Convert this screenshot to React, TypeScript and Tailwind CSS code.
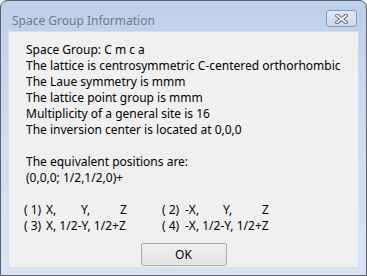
import React from "react";

const font = { fontFamily: '"Noto Sans", "Open Sans", sans-serif' };

export default function App() {
  return (
    <div className="w-[367px] h-[276px] bg-white" style={font}>
      <div className="w-[367px] h-[276px] rounded-t-[7px] border border-[#5b6069] bg-gradient-to-b from-[#bcd0ea] via-[#cfdef0] to-[#d8e4f3] flex flex-col">
        <div className="h-[30px] flex items-start justify-between shrink-0">
          <div className="pl-[11px] pt-[12px] text-[12px] leading-[16px] text-[#6d7a8a]">Space Group Information</div>
          <div className="mt-[9px] mr-[9px] w-[31px] h-[17px] rounded-[3px] border border-[#8a9bb3] bg-gradient-to-b from-[#e0e8f3] to-[#cdd9ea] flex items-center justify-center">
            <svg width="13" height="10" viewBox="0 0 13 10">
              <path d="M2 1.5 L11 8.5 M11 1.5 L2 8.5" stroke="#5d6a7c" strokeWidth="3.6" strokeLinecap="square" />
              <path d="M2 1.5 L11 8.5 M11 1.5 L2 8.5" stroke="#ffffff" strokeWidth="1.6" strokeLinecap="square" />
            </svg>
          </div>
        </div>
        <div className="mx-[7px] h-[237px] bg-[#f0f0f0] border border-[#d4dfee] flex flex-col text-[12px] leading-[16px] text-black">
          <div className="pt-[10px] pl-[17px]">
            <div>Space Group: C m c a</div>
            <div>The lattice is centrosymmetric C-centered orthorhombic</div>
            <div>The Laue symmetry is mmm</div>
            <div>The lattice point group is mmm</div>
            <div>Multiplicity of a general site is 16</div>
            <div>The inversion center is located at 0,0,0</div>
            <div className="h-[16px]" />
            <div>The equivalent positions are:</div>
            <div>(0,0,0; 1/2,1/2,0)+</div>
            <div className="h-[16px]" />
          </div>
          <div className="pl-[15px]">
            <div className="flex whitespace-pre">
              <span className="w-[22px]">( 1)</span>
              <span className="w-[35px]">X,</span>
              <span className="w-[39px]">Y,</span>
              <span className="w-[42px]">Z</span>
              <span className="w-[23px]">( 2)</span>
              <span className="w-[38px]">-X,</span>
              <span className="w-[39px]">Y,</span>
              <span>Z</span>
            </div>
            <div className="flex whitespace-pre">
              <span className="w-[22px]">( 3)</span>
              <span className="w-[116px]">X, 1/2-Y, 1/2+Z</span>
              <span className="w-[23px]">( 4)</span>
              <span>-X, 1/2-Y, 1/2+Z</span>
            </div>
          </div>
          <div className="flex justify-center mt-[9px]">
            <button className="w-[86px] h-[23px] border border-[#acacac] rounded-[2px] bg-gradient-to-b from-[#f0f0f0] to-[#e3e3e3] text-[12px] leading-[16px] text-black" style={font}>
              OK
            </button>
          </div>
        </div>
      </div>
    </div>
  );
}
